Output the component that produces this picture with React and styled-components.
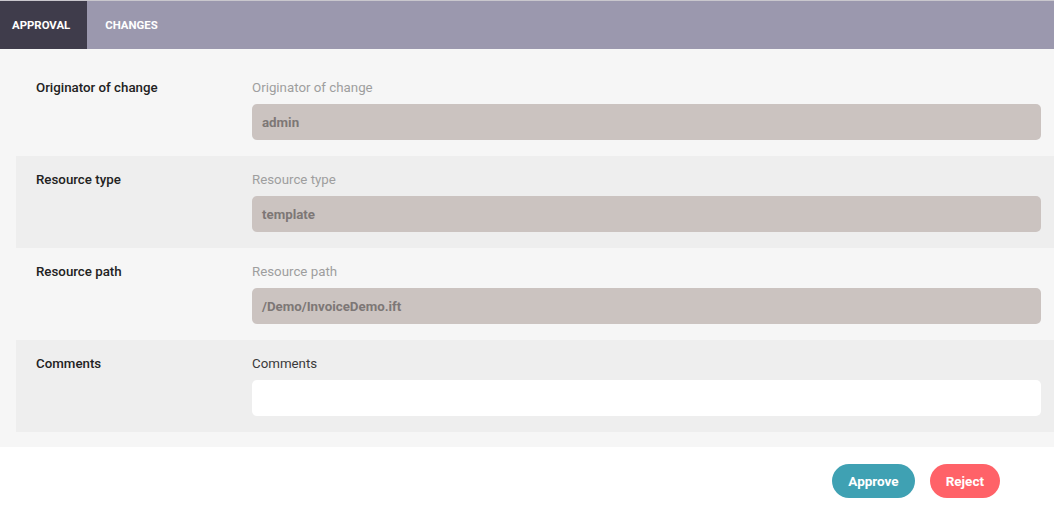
import React from 'react';
import styled, { createGlobalStyle } from 'styled-components';

const GlobalStyle = createGlobalStyle`
  html, body {
    margin: 0;
    padding: 0;
    background: #ffffff;
    font-family: Roboto, "Liberation Sans", Arial, sans-serif;
  }
`;

const Page = styled.div`
  width: 1054px;
  border-top: 1px solid #c9c7cd;
`;

const TabBar = styled.div`
  display: flex;
  height: 48px;
  background: #9b98ae;
`;

const Tab = styled.div`
  display: flex;
  align-items: center;
  padding-left: ${p => (p.active ? '12px' : '18px')};
  padding-right: ${p => (p.active ? '17px' : '18px')};
  background: ${p => (p.active ? '#3f3c4b' : 'transparent')};
  color: #ffffff;
  font-size: 11.4px;
  font-weight: 700;
  text-transform: uppercase;
`;

const Body = styled.div`
  background: #f6f6f6;
  padding: 15px 0 15px 16px;
`;

const Row = styled.div`
  display: flex;
  padding: 16px 13px 16px 20px;
  background: ${p => (p.shaded ? '#eeeeee' : 'transparent')};
`;

const RowLabel = styled.div`
  width: 216px;
  flex-shrink: 0;
  font-size: 13.3px;
  font-weight: 500;
  line-height: 16px;
  color: #222222;
`;

const Field = styled.div`
  flex: 1;
  display: flex;
  flex-direction: column;
  gap: 8px;
`;

const FieldLabel = styled.div`
  font-size: 13.3px;
  line-height: 16px;
  color: ${p => (p.dark ? '#3a3a3a' : '#9e9e9e')};
`;

const Input = styled.div`
  height: 36px;
  display: flex;
  align-items: center;
  padding: 0 10px;
  border-radius: 5px;
  background: ${p => (p.editable ? '#ffffff' : '#cbc3c0')};
  color: #7d7776;
  font-size: 13.3px;
  font-weight: 700;
`;

const Actions = styled.div`
  display: flex;
  justify-content: flex-end;
  gap: 15px;
  padding: 17px 54px 0 0;
`;

const Button = styled.button`
  height: 34px;
  padding: 0 16px;
  border: none;
  border-radius: 17px;
  background: ${p => p.color};
  color: #ffffff;
  font-family: inherit;
  font-size: 13.5px;
  font-weight: 700;
  cursor: pointer;
`;

const rows = [
  { label: 'Originator of change', value: 'admin' },
  { label: 'Resource type', value: 'template' },
  { label: 'Resource path', value: '/Demo/InvoiceDemo.ift' },
];

export default function App() {
  return (
    <Page>
      <GlobalStyle />
      <TabBar>
        <Tab active>Approval</Tab>
        <Tab>Changes</Tab>
      </TabBar>
      <Body>
        {rows.map((r, i) => (
          <Row key={r.label} shaded={i % 2 === 1}>
            <RowLabel>{r.label}</RowLabel>
            <Field>
              <FieldLabel>{r.label}</FieldLabel>
              <Input>{r.value}</Input>
            </Field>
          </Row>
        ))}
        <Row shaded>
          <RowLabel>Comments</RowLabel>
          <Field>
            <FieldLabel dark>Comments</FieldLabel>
            <Input editable />
          </Field>
        </Row>
      </Body>
      <Actions>
        <Button color="#3fa1b3">Approve</Button>
        <Button color="#ff6268">Reject</Button>
      </Actions>
    </Page>
  );
}
